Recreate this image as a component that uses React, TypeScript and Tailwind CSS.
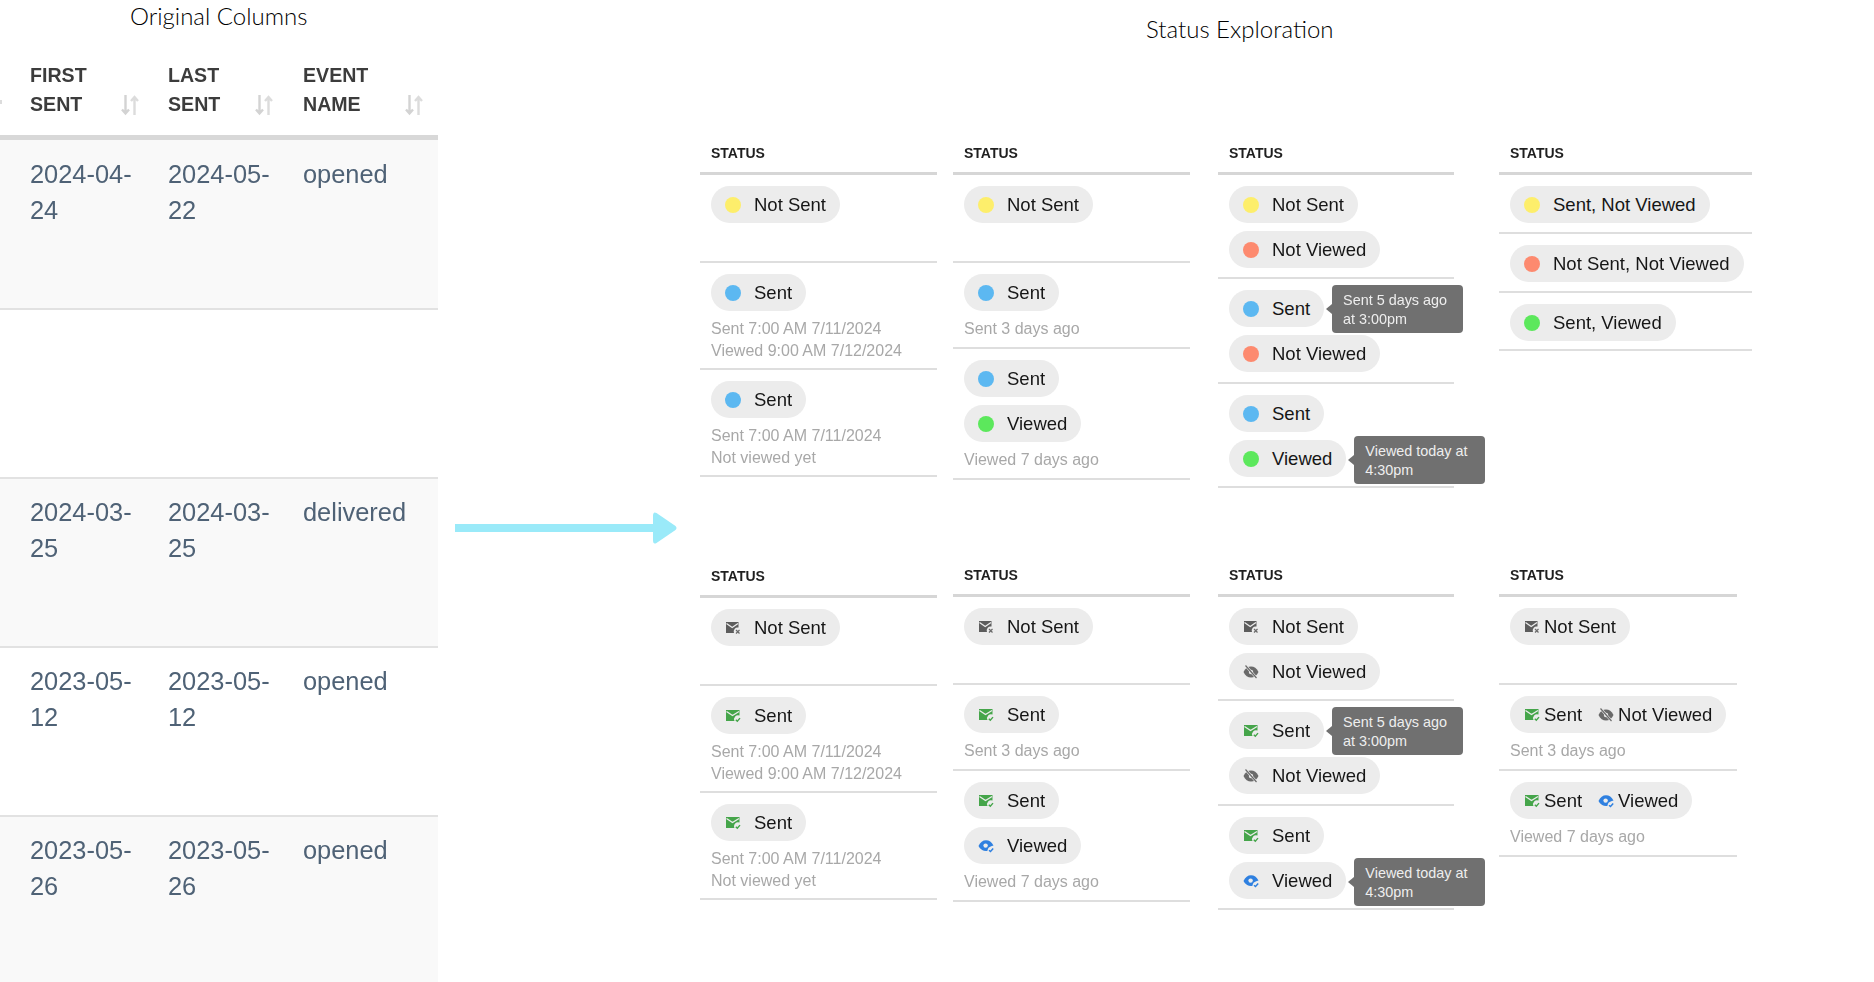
import type { ReactNode } from 'react'

const sans = "font-['Liberation_Sans',Arial,sans-serif]"

function Dot({ className }: { className: string }) {
  return <span className={`w-4 h-4 rounded-full flex-none ${className}`} />
}

function MailOff() {
  return (
    <svg viewBox="0 0 16 14" className="w-4 h-[14px] flex-none">
      <path d="M1 1h12.5v5.5a4 4 0 0 0-4.500 5.500H1z" fill="#5c5c5c" />
      <path d="M1.500 2.500 7.200 6.500 13 2.500" fill="none" stroke="#ececec" strokeWidth="1.300" />
      <path d="M11 9l3.500 3.500M14.500 9 11 12.500" stroke="#6a6a6a" strokeWidth="1.200" />
    </svg>
  )
}

function MailSent() {
  return (
    <svg viewBox="0 0 16 14" className="w-4 h-[14px] flex-none">
      <path d="M1 1h13.500v5.500a4 4 0 0 0-5 5.500H1z" fill="#45a54a" />
      <path d="M1.500 2.500 7.500 6.500 14 2.500" fill="none" stroke="#ececec" strokeWidth="1.300" />
      <path d="M10.800 10.800l1.500 1.500 2.700-3.200" fill="none" stroke="#45a54a" strokeWidth="1.400" />
    </svg>
  )
}

function EyeOn() {
  return (
    <svg viewBox="0 0 16 14" className="w-4 h-[14px] flex-none">
      <path d="M0.500 7C2.300 3 4.800 1.200 8 1.200S13.700 3 15.500 6.500l-2.300.8a5 5 0 0 0-3.700 4.500A8 8 0 0 1 .5 7z" fill="#2f80e0" />
      <circle cx="7.600" cy="6.600" r="2.200" fill="#ececec" />
      <path d="M11 11.200l1.500 1.300 2.700-3" fill="none" stroke="#2f80e0" strokeWidth="1.500" />
    </svg>
  )
}

function EyeOff() {
  return (
    <svg viewBox="0 0 16 14" className="w-4 h-[14px] flex-none">
      <path d="M.5 7C2.300 3 4.800 1.500 8 1.500S13.700 3 15.500 7C13.700 11 11.200 12.500 8 12.500S2.300 11 .5 7z" fill="#6a6a6a" />
      <circle cx="8" cy="7" r="2.200" fill="#ececec" />
      <path d="M2.500 .5 13.500 13" stroke="#ececec" strokeWidth="2.600" />
      <path d="M2.500 .5 13.500 13" stroke="#6a6a6a" strokeWidth="1.200" />
    </svg>
  )
}

const yellow = <Dot className="bg-[#fdee6b]" />
const blue = <Dot className="bg-[#5cb8f1]" />
const green = <Dot className="bg-[#5ce85c]" />
const coral = <Dot className="bg-[#fd8a6f]" />

function Pill({ icon, label, tip, tipClass }: { icon: ReactNode; label: string; tip?: string[]; tipClass?: string }) {
  return (
    <div className="relative self-start h-[37px] rounded-full bg-[#ececec] flex items-center pl-[14px] pr-[14px] gap-[13px]">
      {icon}
      <span className="text-[18.500px] text-[#161616] whitespace-nowrap">{label}</span>
      {tip && (
        <div className={`absolute left-[calc(100%+8px)] w-[131px] h-[48px] rounded-[4px] bg-[#707070] pl-[11px] pt-[6px] text-[14.400px] leading-[19px] text-[#eee] font-medium whitespace-nowrap ${tipClass}`}>
          <span className="absolute -left-[6px] top-[19px] border-y-[5px] border-r-[6px] border-y-transparent border-r-[#707070]" />
          {tip.map(t => <div key={t}>{t}</div>)}
        </div>
      )}
    </div>
  )
}

// tight pill used by the last column of the icon row
function TightPill({ items }: { items: [ReactNode, string][] }) {
  return (
    <div className="self-start h-[37px] rounded-full bg-[#ececec] flex items-center px-[14px] gap-[16px]">
      {items.map(([icon, label]) => (
        <span key={label} className="flex items-center gap-[4px]">
          {icon}
          <span className="text-[18.500px] text-[#161616] whitespace-nowrap">{label}</span>
        </span>
      ))}
    </div>
  )
}

function Note({ lines }: { lines: string[] }) {
  return (
    <div className="mt-[7px] text-[16px] leading-[21.500px] text-[#a8a8a8] whitespace-nowrap">
      {lines.map(l => <div key={l}>{l}</div>)}
    </div>
  )
}

function Row({ h, children }: { h: string; children: ReactNode }) {
  return <div className={`${h} border-b-2 border-[#dedede] px-[11px] pt-[11px] flex flex-col gap-[8px]`}>{children}</div>
}

function StatusColumn({ className, children }: { className: string; children: ReactNode }) {
  return (
    <div className={`flex-none ${className}`}>
      <div className="h-[32px] border-b-[3px] border-[#d6d6d6] pl-[11px] pt-[1px] text-[14px] leading-[18px] font-bold text-[#1f1f1f]">STATUS</div>
      {children}
    </div>
  )
}

function Variant({ notSent, sent, notViewed, viewed, second }: { notSent: ReactNode; sent: ReactNode; notViewed: ReactNode; viewed: ReactNode; second?: boolean }) {
  return (
    <>
      <StatusColumn className={`w-[237px] ml-0 ${second ? 'mt-[1px]' : ''}`}>
        <Row h="h-[88px]"><Pill icon={notSent} label="Not Sent" /></Row>
        <Row h="h-[107px]">
          <div>
            <div className="flex"><Pill icon={sent} label="Sent" /></div>
            <Note lines={['Sent 7:00 AM 7/11/2024', 'Viewed 9:00 AM 7/12/2024']} />
          </div>
        </Row>
        <Row h="h-[107px]">
          <div>
            <div className="flex"><Pill icon={sent} label="Sent" /></div>
            <Note lines={['Sent 7:00 AM 7/11/2024', 'Not viewed yet']} />
          </div>
        </Row>
      </StatusColumn>
      <StatusColumn className="w-[237px] ml-[16px]">
        <Row h="h-[88px]"><Pill icon={notSent} label="Not Sent" /></Row>
        <Row h="h-[86px]">
          <div>
            <div className="flex"><Pill icon={sent} label="Sent" /></div>
            <Note lines={['Sent 3 days ago']} />
          </div>
        </Row>
        <Row h="h-[131px]">
          <Pill icon={sent} label="Sent" />
          <div>
            <div className="flex"><Pill icon={viewed} label="Viewed" /></div>
            <Note lines={['Viewed 7 days ago']} />
          </div>
        </Row>
      </StatusColumn>
      <StatusColumn className="w-[236px] ml-[28px]">
        <Row h="h-[104px]">
          <Pill icon={notSent} label="Not Sent" />
          <Pill icon={notViewed} label="Not Viewed" />
        </Row>
        <Row h="h-[105px]">
          <Pill icon={sent} label="Sent" tip={['Sent 5 days ago', 'at 3:00pm']} tipClass="top-[-5px]" />
          <Pill icon={notViewed} label="Not Viewed" />
        </Row>
        <Row h="h-[104px]">
          <Pill icon={sent} label="Sent" />
          <Pill icon={viewed} label="Viewed" tip={['Viewed today at', '4:30pm']} tipClass="top-[-4px]" />
        </Row>
      </StatusColumn>
    </>
  )
}

function SortIcon() {
  return (
    <svg viewBox="0 0 20 22" className="w-5 h-[22px] flex-none mb-[3px]">
      <path d="M5.500 1v18M2 15.500l3.500 4 3.500-4" fill="none" stroke="#d3d3d3" strokeWidth="2.400" />
      <path d="M14.500 21V3M11 7l3.500-4 3.500 4" fill="none" stroke="#dcdcdc" strokeWidth="2.400" />
    </svg>
  )
}

const tableRows = [
  { first: '2024-04-24', last: '2024-05-22', event: 'opened', shade: true },
  { first: '', last: '', event: '', shade: false },
  { first: '2024-03-25', last: '2024-03-25', event: 'delivered', shade: true },
  { first: '2023-05-12', last: '2023-05-12', event: 'opened', shade: false },
  { first: '2023-05-26', last: '2023-05-26', event: 'opened', shade: true },
]

function OriginalColumns() {
  return (
    <div className="w-[438px] flex-none h-full flex flex-col">
      <div className="h-[34px] pl-[130px] pb-[2px] flex items-center font-['Lato',sans-serif] font-light text-[24px] text-black">Original Columns</div>
      <div className="relative h-[106px] border-b-[5px] border-[#d8d8d8] pt-[27px] pl-[30px] grid grid-cols-[138px_135px_135px] text-[19.600px] leading-[29px] font-bold text-[#3c3c3c] blur-[0.4px]">
        <span className="absolute left-0 top-[66px] w-[2px] h-[4px] bg-[#dcdcdc]" />
        <div className="flex items-end justify-between pr-[28px] h-[58px]"><span>FIRST<br />SENT</span><SortIcon /></div>
        <div className="flex items-end justify-between pr-[29px] h-[58px]"><span>LAST<br />SENT</span><SortIcon /></div>
        <div className="flex items-end justify-between pr-[14px] h-[58px]"><span>EVENT<br />NAME</span><SortIcon /></div>
      </div>
      <div className="flex-1 flex flex-col blur-[0.4px]">
        {tableRows.map((r, i) => (
          <div
            key={i}
            className={`${i === 4 ? 'flex-1' : i === 0 ? 'h-[170px] border-b-2 border-[#e2e2e2]' : 'h-[169px] border-b-2 border-[#e2e2e2]'} ${r.shade ? 'bg-[#f9f9f9]' : 'bg-white'} ${i === 0 ? 'pt-[16px]' : 'pt-[15px]'} pl-[30px] grid grid-cols-[138px_135px_135px] text-[25.400px] leading-[36px] text-[#4f6276]`}
          >
            <div className="pr-[20px]">{r.first}</div>
            <div className="pr-[20px]">{r.last}</div>
            <div>{r.event}</div>
          </div>
        ))}
      </div>
    </div>
  )
}

export default function App() {
  return (
    <div className={`w-[1874px] h-[982px] bg-white overflow-hidden flex ${sans}`}>
      <OriginalColumns />
      <div className="w-[262px] flex-none pl-[17px] pt-[512px]">
        <svg viewBox="0 0 222 32" className="w-[222px] h-[32px]">
          <rect x="0" y="12" width="200" height="8" fill="#9aeaf9" />
          <path d="M201.500 1 L220.500 14 Q222.500 16 220.500 18 L201.500 31 Q198 33 198 28 V4 Q198 -1 201.500 1z" fill="#9aeaf9" />
        </svg>
      </div>
      <div className="flex-1 flex flex-col">
        <div className="h-[60px] pl-[446px] pb-[2px] flex items-center font-['Lato',sans-serif] font-light text-[24px] text-black">Status Exploration</div>
        <div className="mt-[83px] h-[422px] flex items-start blur-[0.4px]">
          <Variant notSent={yellow} sent={blue} notViewed={coral} viewed={green} />
          <StatusColumn className="w-[253px] ml-[45px]">
            <Row h="h-[59px]"><Pill icon={yellow} label="Sent, Not Viewed" /></Row>
            <Row h="h-[59px]"><Pill icon={coral} label="Not Sent, Not Viewed" /></Row>
            <Row h="h-[58px]"><Pill icon={green} label="Sent, Viewed" /></Row>
          </StatusColumn>
        </div>
        <div className="flex items-start blur-[0.4px]">
          <Variant notSent={<MailOff />} sent={<MailSent />} notViewed={<EyeOff />} viewed={<EyeOn />} second />
          <StatusColumn className="w-[238px] ml-[45px]">
            <Row h="h-[88px]"><TightPill items={[[<MailOff />, 'Not Sent']]} /></Row>
            <Row h="h-[86px]">
              <div>
                <div className="flex"><TightPill items={[[<MailSent />, 'Sent'], [<EyeOff />, 'Not Viewed']]} /></div>
                <Note lines={['Sent 3 days ago']} />
              </div>
            </Row>
            <Row h="h-[86px]">
              <div>
                <div className="flex"><TightPill items={[[<MailSent />, 'Sent'], [<EyeOn />, 'Viewed']]} /></div>
                <Note lines={['Viewed 7 days ago']} />
              </div>
            </Row>
          </StatusColumn>
        </div>
      </div>
    </div>
  )
}
